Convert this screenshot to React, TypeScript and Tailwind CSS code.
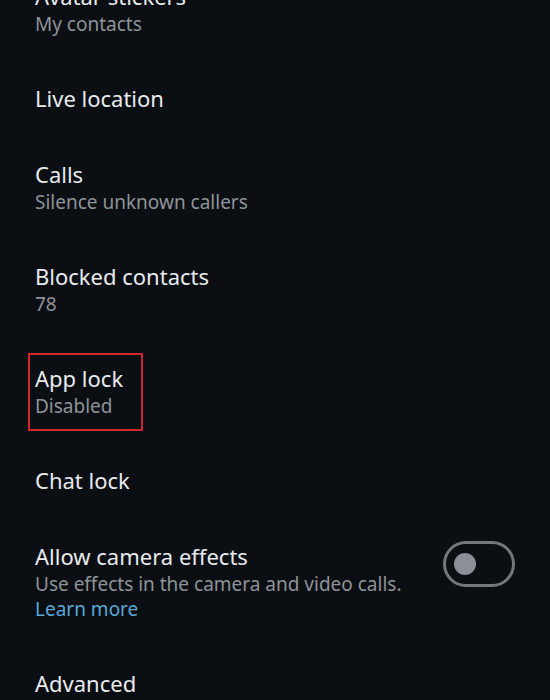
import { ReactNode } from 'react';

type Row = {
  title: string;
  subtitle?: ReactNode;
  highlight?: boolean;
  toggle?: boolean;
};

const rows: Row[] = [
  { title: 'Avatar stickers', subtitle: 'My contacts' },
  { title: 'Live location' },
  { title: 'Calls', subtitle: 'Silence unknown callers' },
  { title: 'Blocked contacts', subtitle: '78' },
  { title: 'App lock', subtitle: 'Disabled', highlight: true },
  { title: 'Chat lock' },
  {
    title: 'Allow camera effects',
    subtitle: (
      <>
        Use effects in the camera and video calls.
        <br />
        <span className="text-[#5aa7d6]">Learn more</span>
      </>
    ),
    toggle: true,
  },
  { title: 'Advanced' },
];

function Toggle() {
  return (
    <div className="flex h-[46px] w-[72px] shrink-0 items-center rounded-full border-[3px] border-[#73787d] px-[8px]">
      <div className="h-[22px] w-[22px] rounded-full bg-[#8a9096]" />
    </div>
  );
}

export default function App() {
  return (
    <div
      className="h-[700px] w-[550px] overflow-hidden bg-[#0b0f13]"
      style={{ fontFamily: '"Noto Sans", "Open Sans", sans-serif' }}
    >
      <div className="-mt-[42px]">
        {rows.map(row => (
          <div key={row.title} className="flex items-start justify-between py-[23px] pl-[35px] pr-[35px]">
            <div className="relative">
              <div className="text-[22px] leading-[30px] text-[#e8eaed]">{row.title}</div>
              {row.subtitle && (
                <div className="mt-[1px] text-[19px] leading-[25px] text-[#8e9398]">{row.subtitle}</div>
              )}
              {row.highlight && (
                <span className="absolute -left-[7px] -top-[10px] h-[78px] w-[115px] border-2 border-[#d0262d]" />
              )}
            </div>
            {row.toggle && <Toggle />}
          </div>
        ))}
      </div>
    </div>
  );
}
